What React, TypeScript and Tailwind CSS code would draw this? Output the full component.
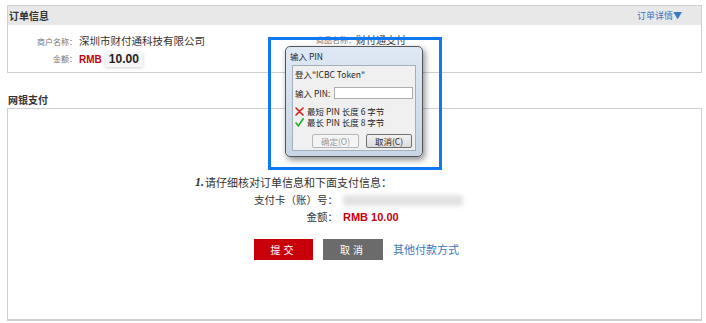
import React from "react";

const cjk = { fontFamily: '"Noto Sans CJK SC", "Liberation Sans", sans-serif' };

function CrossIcon() {
  return (
    <svg width="9" height="9" viewBox="0 0 9 9" className="shrink-0">
      <path d="M1 1 L8 8 M8 1 L1 8" stroke="#d2201c" strokeWidth="1.6" strokeLinecap="round" />
    </svg>
  );
}

function CheckIcon() {
  return (
    <svg width="9" height="9" viewBox="0 0 9 9" className="shrink-0">
      <path d="M1 5 L3.4 7.8 L8.2 0.8" stroke="#1fae2a" strokeWidth="1.6" fill="none" strokeLinecap="round" />
    </svg>
  );
}

function PinDialog() {
  return (
    <>
      <div className="absolute left-[268px] top-[37px] h-[133px] w-[174px] border-[3px] border-[#0f78f2]" />
      <div className="absolute left-[285px] top-[46px] flex h-[111px] w-[138px] flex-col rounded-[5px] border border-[#54585e] bg-gradient-to-b from-[#dfe9f5] to-[#c7d5e5] shadow-[2px_3px_6px_rgba(0,0,0,0.45)]">
        <div className="flex h-[18px] items-center pl-[4px] text-[8.5px] text-[#1e1e1e]">输入 PIN</div>
        <div className="mx-[6px] mb-[5px] flex flex-1 flex-col border border-[#a3afbd] bg-[#f0f0f0] px-[2px] pt-[3px] text-[8.5px] leading-[11px] text-[#1e1e1e] whitespace-nowrap">
          <div>登入"ICBC Token"</div>
          <div className="mt-[7px] flex items-center">
            <span className="w-[39px]">输入 PIN:</span>
            <div className="h-[12px] w-[79px] border border-[#abadb3] bg-white" />
          </div>
          <div className="mt-[7px] flex items-center gap-[3px]">
            <CrossIcon />
            <span>最短 PIN 长度 6 字节</span>
          </div>
          <div className="flex items-center gap-[3px]">
            <CheckIcon />
            <span>最长 PIN 长度 8 字节</span>
          </div>
          <div className="mt-[6px] flex justify-end gap-[7px] pr-[1px]">
            <div className="flex h-[14px] w-[47px] items-center justify-center rounded-[2px] border border-[#b5b8bb] bg-[#f4f4f4] text-[#9a9a9a]">
              确定(O)
            </div>
            <div className="flex h-[14px] w-[46px] items-center justify-center rounded-[2px] border border-[#707070] bg-gradient-to-b from-[#f2f2f2] to-[#dcdcdc] text-[#1e1e1e]">
              取消(C)
            </div>
          </div>
        </div>
      </div>
    </>
  );
}

export default function App() {
  return (
    <div className="relative h-[323px] w-[706px] overflow-hidden bg-white pt-[5px] whitespace-nowrap" style={cjk}>
      {/* 订单信息 */}
      <div className="ml-[7px] mr-[4px] border border-[#cfcfcf]">
        <div className="flex h-[19px] items-center justify-between bg-[#e8e8e8] pl-[1px] pr-[19px]">
          <span className="text-[10px] font-bold text-[#333]">订单信息</span>
          <span className="text-[9px] text-[#3a76c0]">订单详情▼</span>
        </div>
        <div className="h-[47px] pl-[29px] pt-[9px]">
          <div className="flex h-[14px] items-end">
            <div className="flex w-[279px] items-end">
              <span className="w-[42px] shrink-0 text-[8px] leading-[12px] text-[#777]">商户名称：</span>
              <span className="text-[10.5px] leading-[14px] text-[#333]">深圳市财付通科技有限公司</span>
            </div>
            <div className="mb-[2px] flex items-end">
              <span className="text-[8px] leading-[12px] text-[#777]">商品名称：</span>
              <span className="text-[10px] leading-[12px] text-[#333]">财付通支付</span>
            </div>
          </div>
          <div className="mt-[3px] flex h-[16px] items-center">
            <span className="w-[42px] shrink-0 pr-[2px] text-right text-[8px] text-[#777]">金额：</span>
            <span className="text-[10px] font-bold text-[#c8000a]" style={{ fontFamily: '"Liberation Sans", sans-serif' }}>
              RMB
            </span>
            <span
              className="ml-[3px] bg-[#f6f6f6] px-[4px] text-[12px] font-bold leading-[15px] text-[#222] shadow-[0_1px_3px_rgba(0,0,0,0.18)]"
              style={{ fontFamily: '"Liberation Sans", sans-serif' }}
            >
              10.00
            </span>
          </div>
        </div>
      </div>

      {/* 网银支付 */}
      <div className="ml-[8px] mt-[21px] mb-[2px] text-[10px] font-bold leading-[12px] text-[#333]">网银支付</div>
      <div className="ml-[7px] mr-[4px] h-[213px] border border-b-2 border-[#cfcfcf] pl-[187px] pt-[67px] text-[#333]">
        <div className="flex items-end text-[11px] leading-[13px]">
          <span className="mr-[1px] font-bold italic text-[12px]" style={{ fontFamily: '"Liberation Serif", serif' }}>
            1.
          </span>
          请仔细核对订单信息和下面支付信息：
        </div>
        <div className="mt-[4px] flex h-[14px] items-center">
          <span className="w-[148px] shrink-0 pr-[5px] text-right text-[10.5px]">支付卡（账）号：</span>
          <div className="h-[11px] w-[120px] rounded-[3px] bg-[#e2e2e2] blur-[2px]" />
        </div>
        <div className="mt-[3px] flex h-[14px] items-center">
          <span className="w-[148px] shrink-0 pr-[5px] text-right text-[10.5px]">金额：</span>
          <span className="text-[11px] font-bold text-[#c8000a]" style={{ fontFamily: '"Liberation Sans", sans-serif' }}>
            RMB 10.00
          </span>
        </div>
        <div className="ml-[59px] mt-[15px] flex items-center">
          <button className="h-[21px] w-[59px] bg-[#c8000a] text-[10px] tracking-[3px] text-white">提交</button>
          <button className="ml-[10px] h-[21px] w-[60px] bg-[#6b6b6b] text-[10px] tracking-[3px] text-white">取消</button>
          <span className="ml-[10px] text-[11px] text-[#3a76c0]">其他付款方式</span>
        </div>
      </div>

      <PinDialog />
    </div>
  );
}
